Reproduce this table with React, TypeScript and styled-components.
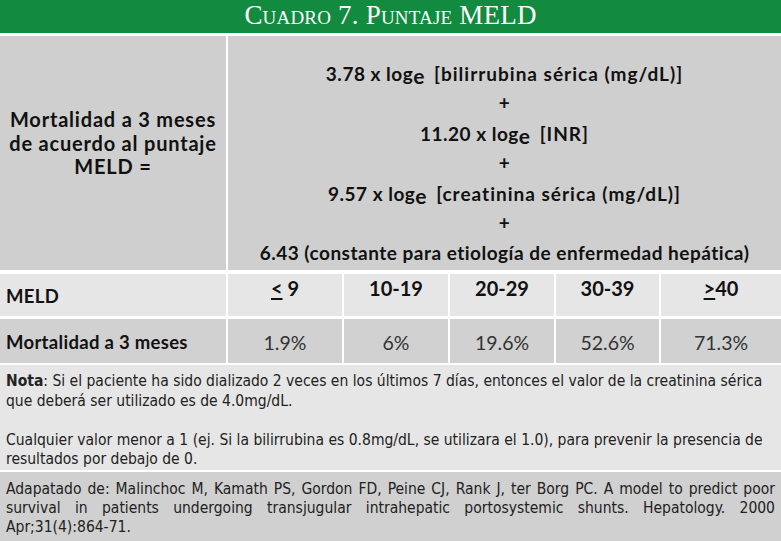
import React from "react";
import styled, { createGlobalStyle } from "styled-components";

const GlobalStyle = createGlobalStyle`
  body {
    margin: 0;
    background: #fff;
  }
`;

const columns = "226px 114px 104px 104px 103px 1fr";

const values = [
  { range: "9", mark: "<", mortality: "1.9%" },
  { range: "10-19", mark: "", mortality: "6%" },
  { range: "20-29", mark: "", mortality: "19.6%" },
  { range: "30-39", mark: "", mortality: "52.6%" },
  { range: "40", mark: ">", mortality: "71.3%" },
];

const App = () => (
  <>
    <GlobalStyle />
    <Card>
      <TitleBar>Cuadro 7. Puntaje MELD</TitleBar>
      <FormulaRow>
        <FormulaLabel>
          Mortalidad a 3 meses
          <br />
          de acuerdo al puntaje
          <br />
          MELD =
        </FormulaLabel>
        <FormulaBody>
          <FormulaLine>
            3.78 x log<Sub>e</Sub> <Small>[bilirrubina sérica (mg/dL)]</Small>
          </FormulaLine>
          <FormulaLine>+</FormulaLine>
          <FormulaLine>
            11.20 x log<Sub>e</Sub> <Small>[INR]</Small>
          </FormulaLine>
          <FormulaLine>+</FormulaLine>
          <FormulaLine>
            9.57 x log<Sub>e</Sub> <Small>[creatinina sérica (mg/dL)]</Small>
          </FormulaLine>
          <FormulaLine>+</FormulaLine>
          <FormulaLine>
            6.43 (constante para etiología de enfermedad hepática)
          </FormulaLine>
        </FormulaBody>
      </FormulaRow>
      <DataRow $tone="#e6e6e6" $height={42} $top={4}>
        <RowLabel>MELD</RowLabel>
        {values.map((v) => (
          <RangeCell key={v.range}>
            {v.mark && <Underlined>{v.mark}</Underlined>}
            {v.mark === "<" ? " " : ""}
            {v.range}
          </RangeCell>
        ))}
      </DataRow>
      <DataRow $tone="#d1d1d1" $height={44} $top={3}>
        <RowLabel>Mortalidad a 3 meses</RowLabel>
        {values.map((v) => (
          <ValueCell key={v.range}>{v.mortality}</ValueCell>
        ))}
      </DataRow>
      <NoteBlock>
        <p>
          <b>Nota</b>: Si el paciente ha sido dializado 2 veces en los últimos 7
          días, entonces el valor de la creatinina sérica que deberá ser
          utilizado es de 4.0mg/dL.
        </p>
        <p>
          Cualquier valor menor a 1 (ej. Si la bilirrubina es 0.8mg/dL, se
          utilizara el 1.0), para prevenir la presencia de resultados por debajo
          de 0.
        </p>
      </NoteBlock>
      <SourceBlock>
        Adapatado de: Malinchoc M, Kamath PS, Gordon FD, Peine CJ, Rank J, ter
        Borg PC. A model to predict poor survival in patients undergoing
        transjugular intrahepatic portosystemic shunts. Hepatology. 2000
        Apr;31(4):864-71.
      </SourceBlock>
    </Card>
  </>
);

const Card = styled.div`
  width: 781px;
  height: 541px;
  overflow: hidden;
  background: #fff;
  display: flex;
  flex-direction: column;
  color: #1a1a1a;
`;

const TitleBar = styled.div`
  height: 33px;
  background: #128a3f;
  color: #fff;
  font-family: "Liberation Serif", serif;
  font-variant: small-caps;
  font-size: 27px;
  letter-spacing: 0.2px;
  display: flex;
  align-items: center;
  justify-content: center;
  padding-bottom: 2px;
  box-sizing: border-box;
`;

const FormulaRow = styled.div`
  margin-top: 3px;
  height: 234px;
  display: grid;
  grid-template-columns: 226px 1fr;
  column-gap: 2px;
  font-family: Lato, sans-serif;
  font-weight: 700;
  color: #111;
`;

const FormulaLabel = styled.div`
  background: #cfcfcf;
  text-align: center;
  font-size: 20px;
  letter-spacing: 0.8px;
  line-height: 23.5px;
  padding-top: 72px;
`;

const FormulaBody = styled.div`
  background: #cfcfcf;
  padding-top: 22px;
  display: flex;
  flex-direction: column;
  align-items: center;
  font-size: 19px;
  letter-spacing: 0.5px;
`;

const FormulaLine = styled.div`
  height: 30px;
  line-height: 30px;
  white-space: nowrap;
`;

const Sub = styled.span`
  position: relative;
  top: 3px;
  font-size: 21px;
`;

const Small = styled.span`
  font-size: 19px;
  letter-spacing: 1px;
  margin-left: 4px;
`;

const DataRow = styled.div<{ $tone: string; $height: number; $top: number }>`
  margin-top: ${(p) => p.$top}px;
  height: ${(p) => p.$height}px;
  display: grid;
  grid-template-columns: ${columns};
  column-gap: 2px;
  font-family: Lato, sans-serif;
  color: #111;
  & > * {
    background: ${(p) => p.$tone};
  }
`;

const RowLabel = styled.div`
  font-weight: 700;
  font-size: 18.5px;
  letter-spacing: 0.3px;
  display: flex;
  align-items: center;
  padding-left: 6px;
  padding-top: 2px;
`;

const RangeCell = styled.div`
  font-weight: 700;
  font-size: 20px;
  text-align: center;
  padding-top: 3px;
  line-height: 22px;
`;

const Underlined = styled.span`
  text-decoration: underline;
  text-decoration-thickness: 1.5px;
  text-underline-offset: 2px;
`;

const ValueCell = styled.div`
  font-weight: 400;
  font-size: 19.5px;
  color: #333;
  display: flex;
  align-items: center;
  justify-content: center;
  padding-top: 2px;
`;

const NoteBlock = styled.div`
  margin-top: 2px;
  height: 105px;
  background: #e6e6e6;
  padding: 7px 6px 0;
  box-sizing: border-box;
  font-family: "Liberation Sans Narrow", "DejaVu Sans Condensed", sans-serif;
  font-size: 15.5px;
  line-height: 19.5px;
  color: #222;
  p {
    margin: 0 0 19.5px;
  }
  b {
    font-weight: 700;
  }
`;

const SourceBlock = styled.div`
  margin-top: 2px;
  flex: 1;
  background: #d0d0d0;
  padding: 8px 6px 0;
  font-family: "Liberation Sans Narrow", "DejaVu Sans Condensed", sans-serif;
  font-size: 15.5px;
  line-height: 19px;
  color: #222;
  text-align: justify;
`;

export default App;
